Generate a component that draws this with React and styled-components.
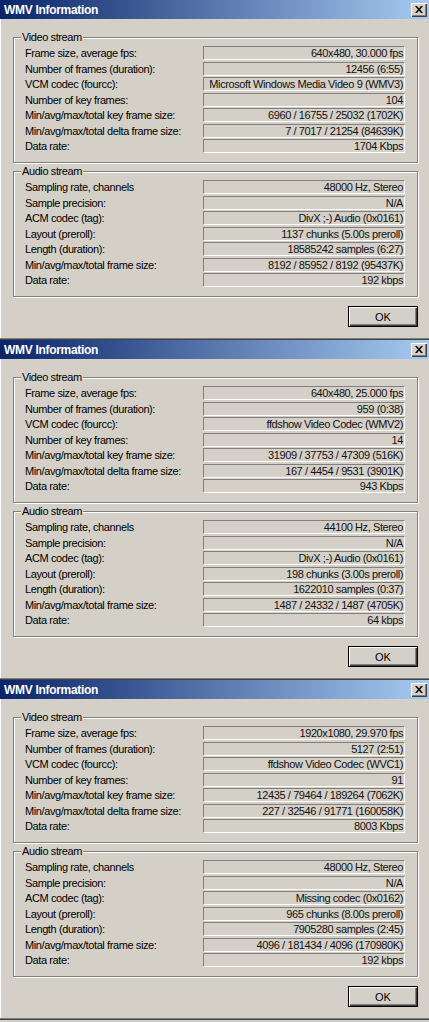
import React from 'react'
import styled, { createGlobalStyle } from 'styled-components'

const GlobalStyle = createGlobalStyle`
  html, body {
    margin: 0;
    padding: 0;
    background: #d4d0c8;
  }
  body {
    font-family: "Liberation Sans", Arial, sans-serif;
    font-size: 11px;
    letter-spacing: -0.4px;
    color: #000;
  }
`

const Window = styled.section`
  height: 340px;
  display: flex;
  flex-direction: column;
  background: #d4d0c8;
  box-shadow: inset 0 -1px 0 #404040, inset 0 -2px 0 #808080, inset 1px 0 0 #fff;
`

const TitleBar = styled.div`
  height: 19px;
  flex: none;
  display: flex;
  align-items: center;
  justify-content: space-between;
  padding: 0 2px 0 4px;
  background: linear-gradient(to right, #0a246a, #a6caf0);
`

const TitleText = styled.span`
  color: #fff;
  font-weight: bold;
  font-size: 12px;
  letter-spacing: -0.3px;
`

const CloseButton = styled.button`
  width: 16px;
  height: 14px;
  padding: 0;
  border: none;
  display: flex;
  align-items: center;
  justify-content: center;
  background: #d4d0c8;
  box-shadow: inset 1px 1px 0 #fff, inset -1px -1px 0 #404040, inset -2px -2px 0 #808080;
`

const Body = styled.div`
  flex: 1;
  display: flex;
  flex-direction: column;
  padding: 18px 11px 0 13px;
`

const GroupBox = styled.div`
  position: relative;
  border: 1px solid #808080;
  box-shadow: inset 1px 1px 0 #fff, 1px 1px 0 #fff;
  padding: 8px 12px 9px 11px;
  margin-top: ${p => (p.$first ? '0' : '8px')};
`

const Legend = styled.span`
  position: absolute;
  top: -7px;
  left: 7px;
  padding: 0 1px;
  line-height: 13px;
  background: #d4d0c8;
`

const Rows = styled.div`
  display: grid;
  grid-template-columns: 1fr 202px;
  grid-auto-rows: 14px;
  row-gap: 1.5px;
`

const Label = styled.div`
  line-height: 14px;
  white-space: nowrap;
`

const Value = styled.div`
  box-sizing: border-box;
  height: 14px;
  line-height: 12px;
  text-align: right;
  padding-right: 1px;
  white-space: nowrap;
  overflow: hidden;
  color: #111;
  border-top: 1px solid #808080;
  border-left: 1px solid #808080;
  border-bottom: 1px solid #fff;
  border-right: 1px solid #fff;
`

const Footer = styled.div`
  display: flex;
  justify-content: flex-end;
  margin-top: 9px;
`

const OkButton = styled.button`
  width: 70px;
  height: 21px;
  font-family: "Liberation Sans", Arial, sans-serif;
  font-size: 11px;
  color: #000;
  background: #d4d0c8;
  border: 1px solid #000;
  box-shadow: inset 1px 1px 0 #fff, inset -1px -1px 0 #404040, inset -2px -2px 0 #808080;
  padding: 0;
`

const videoLabels = [
  'Frame size, average fps:',
  'Number of frames (duration):',
  'VCM codec (fourcc):',
  'Number of key frames:',
  'Min/avg/max/total key frame size:',
  'Min/avg/max/total delta frame size:',
  'Data rate:',
]

const audioLabels = [
  'Sampling rate, channels',
  'Sample precision:',
  'ACM codec (tag):',
  'Layout (preroll):',
  'Length (duration):',
  'Min/avg/max/total frame size:',
  'Data rate:',
]

const dialogs = [
  {
    video: [
      '640x480, 30.000 fps',
      '12456 (6:55)',
      'Microsoft Windows Media Video 9 (WMV3)',
      '104',
      '6960 / 16755 / 25032 (1702K)',
      '7 / 7017 / 21254 (84639K)',
      '1704 Kbps',
    ],
    audio: [
      '48000 Hz, Stereo',
      'N/A',
      'DivX ;-) Audio (0x0161)',
      '1137 chunks (5.00s preroll)',
      '18585242 samples (6:27)',
      '8192 / 85952 / 8192 (95437K)',
      '192 kbps',
    ],
  },
  {
    video: [
      '640x480, 25.000 fps',
      '959 (0:38)',
      'ffdshow Video Codec (WMV2)',
      '14',
      '31909 / 37753 / 47309 (516K)',
      '167 / 4454 / 9531 (3901K)',
      '943 Kbps',
    ],
    audio: [
      '44100 Hz, Stereo',
      'N/A',
      'DivX ;-) Audio (0x0161)',
      '198 chunks (3.00s preroll)',
      '1622010 samples (0:37)',
      '1487 / 24332 / 1487 (4705K)',
      '64 kbps',
    ],
  },
  {
    video: [
      '1920x1080, 29.970 fps',
      '5127 (2:51)',
      'ffdshow Video Codec (WVC1)',
      '91',
      '12435 / 79464 / 189264 (7062K)',
      '227 / 32546 / 91771 (160058K)',
      '8003 Kbps',
    ],
    audio: [
      '48000 Hz, Stereo',
      'N/A',
      'Missing codec (0x0162)',
      '965 chunks (8.00s preroll)',
      '7905280 samples (2:45)',
      '4096 / 181434 / 4096 (170980K)',
      '192 kbps',
    ],
  },
]

const CloseIcon = () => (
  <svg width="8" height="7" viewBox="0 0 8 7">
    <path d="M0 0h2l2 2.5L6 0h2L5 3.5 8 7H6L4 4.5 2 7H0l3-3.5z" fill="#000" />
  </svg>
)

const Group = ({ title, labels, values, first }) => (
  <GroupBox $first={first}>
    <Legend>{title}</Legend>
    <Rows>
      {labels.map((label, i) => (
        <React.Fragment key={i}>
          <Label>{label}</Label>
          <Value>{values[i]}</Value>
        </React.Fragment>
      ))}
    </Rows>
  </GroupBox>
)

const Dialog = ({ video, audio }) => (
  <Window>
    <TitleBar>
      <TitleText>WMV Information</TitleText>
      <CloseButton><CloseIcon /></CloseButton>
    </TitleBar>
    <Body>
      <Group title="Video stream" labels={videoLabels} values={video} first />
      <Group title="Audio stream" labels={audioLabels} values={audio} />
      <Footer>
        <OkButton>OK</OkButton>
      </Footer>
    </Body>
  </Window>
)

export default function App() {
  return (
    <>
      <GlobalStyle />
      {dialogs.map((d, i) => (
        <Dialog key={i} video={d.video} audio={d.audio} />
      ))}
    </>
  )
}
